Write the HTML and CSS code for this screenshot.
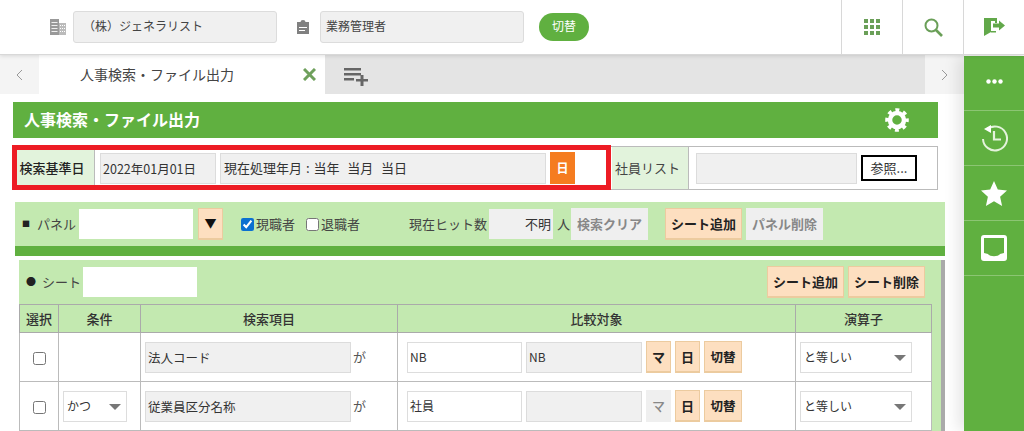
FILE: index.html
```html
<!DOCTYPE html>
<html lang="ja">
<head>
<meta charset="utf-8">
<title>人事検索・ファイル出力</title>
<link rel="stylesheet" href="styles.css">
</head>
<body>
<header class="top">
  <svg class="ic-building" viewBox="0 0 16 16"><path fill="#999" d="M0 0h9v16H0z"/><path fill="#eee" d="M1.500 3h6v1h-6zM1.500 6h6v1h-6zM1.500 9h6v1h-6zM1.500 12h6v1h-6z"/><path fill="#bbb" d="M9 4h7v12H9z"/><path fill="#fff" d="M10 6h1v1h-1zM12 6h1v1h-1zM14 6h1v1h-1zM10 9h1v1h-1zM12 9h1v1h-1zM14 9h1v1h-1zM10 12h1v1h-1zM12 12h1v1h-1zM14 12h1v1h-1z"/></svg>
  <div class="top-field first">（株）ジェネラリスト</div>
  <svg class="ic-clip" viewBox="0 0 12 14"><path fill="#808080" d="M0 2h3.500a2.500 2 0 0 1 5 0H12v12H0z"/><path fill="#fff" d="M2 7h8v1H2zM2 10h6v1H2z"/></svg>
  <div class="top-field second">業務管理者</div>
  <button class="pill">切替</button>
  <div class="top-actions">
    <div class="top-act"><svg width="16" height="16" viewBox="0 0 16 16"><path fill="#6a9f58" d="M0 0h4v4H0zM6 0h4v4H6zM12 0h4v4h-4zM0 6h4v4H0zM6 6h4v4H6zM12 6h4v4h-4zM0 12h4v4H0zM6 12h4v4H6zM12 12h4v4h-4z"/></svg></div>
    <div class="top-act"><svg width="19" height="19" viewBox="0 0 19 19"><circle cx="7.500" cy="7.500" r="6" fill="none" stroke="#6a9f58" stroke-width="2"/><path stroke="#6a9f58" stroke-width="2.600" d="M12 12l6 6"/></svg></div>
    <div class="top-act"><svg width="21" height="18" viewBox="0 0 21 18"><path fill="#62a84a" d="M0 0h13v5h-2V3H7v11l-7 4zM9 13h3v1.500H7V13z"/><path fill="#62a84a" d="M9 5.500h6V2.500l6 5-6 5v-3H9z"/></svg></div>
  </div>
</header>
<div class="body-wrap">
  <div class="main">
    <nav class="tabs">
      <div class="tab-arrow"><svg width="7" height="12" viewBox="0 0 7 12"><path fill="none" stroke="#999" d="M6 1L1 6l5 5"/></svg></div>
      <div class="tab-active">
        <span class="tab-label">人事検索・ファイル出力</span>
        <svg class="tab-x" width="13" height="13" viewBox="0 0 13 13"><path stroke="#6fa05c" stroke-width="3" d="M1 1l11 11M12 1L1 12"/></svg>
      </div>
      <div class="tab-rest"><svg width="24" height="18" viewBox="0 0 24 18"><path fill="#666" d="M0 0h17v2.500H0zM0 5h17v2.500H0zM0 10h10v2.500H0zM16.500 7h3v4H24v2.500h-4.500V18h-3v-4.500H12V11h4.500z"/></svg></div>
      <div class="tab-arrow"><svg width="7" height="12" viewBox="0 0 7 12"><path fill="none" stroke="#999" d="M1 1l5 5-5 5"/></svg></div>
    </nav>
    <main class="content">
      <div class="title-bar">
        <h1>人事検索・ファイル出力</h1>
        <svg width="24" height="24" viewBox="0 0 24 24"><circle cx="12" cy="12" r="7" fill="none" stroke="#fff" stroke-width="4.500"/><circle cx="12" cy="12" r="9.800" fill="none" stroke="#fff" stroke-width="4" stroke-dasharray="3.800 3.900" stroke-dashoffset="1.900"/></svg>
      </div>
      <section class="criteria">
        <div class="crit-label strong">検索基準日</div>
        <div class="crit-cell left">
          <div class="ro date">2022年01月01日</div>
          <div class="ro basis">現在処理年月 : 当年&nbsp;&nbsp;当月&nbsp;&nbsp;当日</div>
          <div class="orange">日</div>
        </div>
        <div class="crit-label plain">社員リスト</div>
        <div class="crit-cell right">
          <div class="ro list"></div>
          <button class="browse">参照...</button>
        </div>
        <div class="red-box"></div>
      </section>
      <section class="panel">
        <span class="lbl mark"><span class="bullet">■</span>パネル</span>
        <div class="input panel-name"></div>
        <button class="btn tri">▼</button>
        <label class="chk first-chk"><input type="checkbox" checked>現職者</label>
        <label class="chk second-chk"><input type="checkbox">退職者</label>
        <span class="lbl hits">現在ヒット数</span>
        <div class="hit-value">不明</div>
        <span class="lbl person">人</span>
        <button class="btn off w77">検索クリア</button>
        <button class="btn w77 gap17">シート追加</button>
        <button class="btn off w77 gap4">パネル削除</button>
      </section>
      <div class="panel-rule"></div>
      <section class="sheet">
        <div class="sheet-head">
          <span class="lbl sheet-lbl"><span class="bullet round">●</span>シート</span>
          <div class="input sheet-name"></div>
          <button class="btn w77 push">シート追加</button>
          <button class="btn w77 gap4">シート削除</button>
        </div>
        <table class="grid">
          <colgroup><col class="c1"><col class="c2"><col class="c3"><col class="c4"><col class="c5"></colgroup>
          <thead><tr><th>選択</th><th>条件</th><th>検索項目</th><th>比較対象</th><th>演算子</th></tr></thead>
          <tbody>
            <tr>
              <td class="center"><input class="rowchk" type="checkbox"></td>
              <td></td>
              <td><div class="item"><div class="ro item-name">法人コード</div><span class="ga">が</span></div></td>
              <td><div class="cmp"><div class="input v1">NB</div><div class="ro v2">NB</div><button class="btn sq">マ</button><button class="btn sq">日</button><button class="btn sw">切替</button></div></td>
              <td><div class="select op">と等しい</div></td>
            </tr>
            <tr>
              <td class="center"><input class="rowchk" type="checkbox"></td>
              <td><div class="select cond">かつ</div></td>
              <td><div class="item"><div class="ro item-name">従業員区分名称</div><span class="ga">が</span></div></td>
              <td><div class="cmp"><div class="input v1">社員</div><div class="ro v2"></div><button class="btn sq off thin">マ</button><button class="btn sq">日</button><button class="btn sw">切替</button></div></td>
              <td><div class="select op">と等しい</div></td>
            </tr>
          </tbody>
        </table>
      </section>
    </main>
  </div>
  <aside class="side">
    <div class="side-item dots"><svg width="17" height="5" viewBox="0 0 17 5"><circle cx="2.500" cy="2.500" r="2.200" fill="#fff"/><circle cx="8.500" cy="2.500" r="2.200" fill="#fff"/><circle cx="14.500" cy="2.500" r="2.200" fill="#fff"/></svg></div>
    <div class="side-item"><svg width="27" height="28" viewBox="0 0 27 28"><path fill="none" stroke="#e4f3dc" stroke-width="2" d="M6 5.500A12 12 0 1 1 2 15"/><path fill="#fff" d="M3 5l7-4v8z"/><path fill="none" stroke="#e4f3dc" stroke-width="2.200" d="M13 7v8.500h7"/></svg></div>
    <div class="side-item"><svg width="26" height="25" viewBox="0 0 26 25"><path fill="#fff" d="M13 0l3.800 8.500 9.200 1-6.900 6.200 2 9.300-8.100-4.700L4.900 25l2-9.300L0 9.500l9.200-1z"/></svg></div>
    <div class="side-item"><svg width="26" height="26" viewBox="0 0 26 26"><path fill="#fff" fill-rule="evenodd" d="M3 0h20a3 3 0 0 1 3 3v20a3 3 0 0 1-3 3H3a3 3 0 0 1-3-3V3a3 3 0 0 1 3-3zM3 3v15l4 1c2 3 10 3 12 0l4-1V3z"/></svg></div>
  </aside>
</div>
</body>
</html>
```
FILE: styles.css
```css
* { box-sizing: border-box; }
html, body { margin: 0; height: 431px; overflow: hidden; background: #fff; }
body { font: 13px/1.2 "Noto Sans CJK JP", "Liberation Sans", sans-serif; color: #333; }
button { font: inherit; padding: 0; }

.top { height: 55px; display: flex; align-items: center; border-bottom: 1px solid #d8d8d8; box-shadow: 0 1px 4px rgba(0,0,0,.12); position: relative; z-index: 3; background: #fff; }
.ic-building { width: 16px; height: 16px; margin-left: 50px; }
.top-field { height: 32px; width: 204px; background: #f0f0f0; border: 1px solid #dcdcdc; border-radius: 3px; display: flex; align-items: center; color: #444; font-size: 12px; margin-top: -1px; }
.top-field.first { margin-left: 7px; padding-left: 9px; }
.top-field.second { margin-left: 11px; padding-left: 5px; }
.ic-clip { width: 12px; height: 14px; margin-left: 20px; }
.pill { margin-left: 15px; width: 50px; height: 28px; border: 0; border-radius: 14px; background: #60b040; color: #fff; font-size: 12px; margin-top: -1px; }
.top-actions { margin-left: auto; display: flex; height: 54px; }
.top-act { width: 61px; border-left: 1px solid #d8d8d8; display: flex; align-items: center; justify-content: center; }

.body-wrap { display: flex; height: 376px; }
.main { width: 964px; flex: none; }
.side { flex: 1; margin-top: 1px; background: #60b040; box-shadow: -6px 0 14px rgba(0,0,0,.1); position: relative; z-index: 2; }
.side-item { height: 55px; border-bottom: 1px solid #8cc573; display: flex; align-items: center; justify-content: center; }
.side-item.dots { padding-bottom: 4px; }

.tabs { display: flex; height: 39px; background: #f4f4f4; }
.tab-arrow { width: 39px; display: flex; align-items: center; justify-content: center; }
.tab-active { width: 286px; background: #fff; display: flex; align-items: center; position: relative; }
.tab-label { margin-left: 41px; font-size: 14px; color: #444; }
.tab-x { margin-left: auto; margin-right: 9px; }
.tab-rest { flex: 1; background: #e4e4e4; display: flex; align-items: center; padding: 4px 0 0 19px; }

.content { position: relative; padding: 8px 0 0 13px; }
.title-bar { width: 925px; height: 36px; background: #60b040; display: flex; align-items: center; justify-content: space-between; padding: 0 29px 0 11px; }
.title-bar h1 { margin: 0; font-size: 16px; font-weight: 700; color: #fff; }

.criteria { position: relative; width: 925px; height: 44px; margin-top: 8px; border: 1px solid #bbb; display: flex; }
.crit-label { background: #e2f3dc; display: flex; align-items: center; justify-content: center; width: 77px; border-right: 1px solid #bbb; color: #444; flex: none; }
.crit-label.strong { font-weight: 500; width: 81px; padding-right: 4px; color: #222; }
.crit-label.plain { padding-right: 5px; }
.crit-cell { display: flex; align-items: center; gap: 4px; flex: none; height: 42px; }
.crit-cell.left { width: 517px; padding-left: 5px; }
.crit-cell.right { padding-left: 7px; }
.ro { background: #f0f0f0; border: 1px solid #dcdcdc; display: flex; align-items: center; font-size: 12.500px; padding-left: 2px; color: #333; flex: none; height: 31px; white-space: nowrap; }
.date { width: 116px; }
.basis { width: 326px; font-size: 13px; word-spacing: 1px; padding-left: 3px; }
.list { width: 161px; }
.orange { width: 25px; height: 32px; background: #f57c20; color: #fff; font-weight: 700; font-size: 12px; display: flex; align-items: center; justify-content: center; }
.browse { width: 56px; height: 26px; background: #fff; border: 2px solid #000; color: #333; border-radius: 0; }
.red-box { position: absolute; left: -2px; top: -2px; width: 599px; height: 45px; border: 5px solid #ed1c24; pointer-events: none; }

.panel { margin: 12px 0 0 2px; width: 930px; height: 44px; background: #c3e9b0; display: flex; align-items: center; }
.lbl { color: #444; white-space: nowrap; }
.mark { margin-left: 7px; width: 57px; display: flex; align-items: center; }
.bullet { font-size: 8px; width: 15px; color: #222; }
.bullet.round { font-size: 10px; width: 16px; margin-left: 3px; }
.input { background: #fff; border: 1px solid #fff; flex: none; height: 30px; display: flex; align-items: center; font-size: 12px; padding-left: 2px; }
.panel-name { width: 114px; }
.btn { height: 32px; background: #fddfc0; border: 1px solid #eccb9f; border-bottom-width: 2px; color: #222; font-weight: 700; font-size: 13px; flex: none; }
.btn.off { background: #efefef; border-color: #efefef; color: #888; }
.tri { width: 25px; margin-left: 5px; font-size: 12px; color: #111; }
.chk { display: flex; align-items: center; color: #444; flex: none; }
.chk input { margin: 0 2px 0 0; width: 13px; height: 13px; accent-color: #0b70d0; }
.first-chk { margin-left: 18px; }
.second-chk { margin-left: 11px; }
.hits { margin-left: 49px; }
.hit-value { width: 64px; height: 30px; background: #f0f0f0; margin-left: 2px; display: flex; align-items: center; justify-content: flex-end; padding-right: 2px; }
.person { margin-left: 4px; width: 14px; }
.w77 { width: 77px; }
.gap17 { margin-left: 17px; }
.gap4 { margin-left: 4px; }
.panel-rule { margin-left: 2px; width: 930px; height: 10px; background: #60b040; }

.sheet { margin: 4px 0 0 6px; width: 926px; height: 171px; background: #c3e9b0; border-right: 4px solid #aaa; position: relative; box-shadow: 0 -4px 0 #fff; }
.sheet-head { height: 44px; display: flex; align-items: center; padding-right: 16px; }
.sheet-lbl { margin-left: 4px; width: 60px; display: flex; align-items: center; }
.sheet-name { width: 114px; }
.push { margin-left: auto; }

.grid { border-collapse: collapse; table-layout: fixed; width: 913px; background: #fff; }
.c1 { width: 39px; } .c2 { width: 82px; } .c3 { width: 257px; } .c4 { width: 398px; } .c5 { width: 136px; }
.grid th { height: 28px; background: #c3e9b0; border: 1px solid #aaa; color: #333; font-weight: 500; font-size: 13px; padding: 0; }
.grid td { height: 49px; border: 1px solid #bbb; padding: 0; vertical-align: middle; }
.center { text-align: center; }
.rowchk { width: 13px; height: 13px; margin: 0; vertical-align: middle; }
.item { display: flex; align-items: center; padding-left: 4px; }
.item-name { width: 206px; height: 31px; }
.ga { margin-left: 2px; color: #555; }
.cmp { display: flex; align-items: center; padding-left: 9px; }
.v1 { width: 115px; height: 31px; border-color: #ddd; }
.v2 { width: 116px; height: 31px; margin-left: 4px; font-size: 12px; }
.sq { width: 25px; margin-left: 4px; }
.sw { width: 38px; margin-left: 4px; font-size: 12.500px; }
.thin { font-weight: 500; }
.select { position: relative; height: 31px; background: #fff; border: 1px solid #ddd; display: flex; align-items: center; padding-left: 3px; font-size: 12px; }
.select::after { content: ""; position: absolute; right: 5px; top: 12px; border: 6px solid transparent; border-top: 6px solid #777; border-bottom-width: 0; }
.op { width: 112px; margin-left: 4px; }
.cond { width: 64px; margin-left: 4px; }
```
